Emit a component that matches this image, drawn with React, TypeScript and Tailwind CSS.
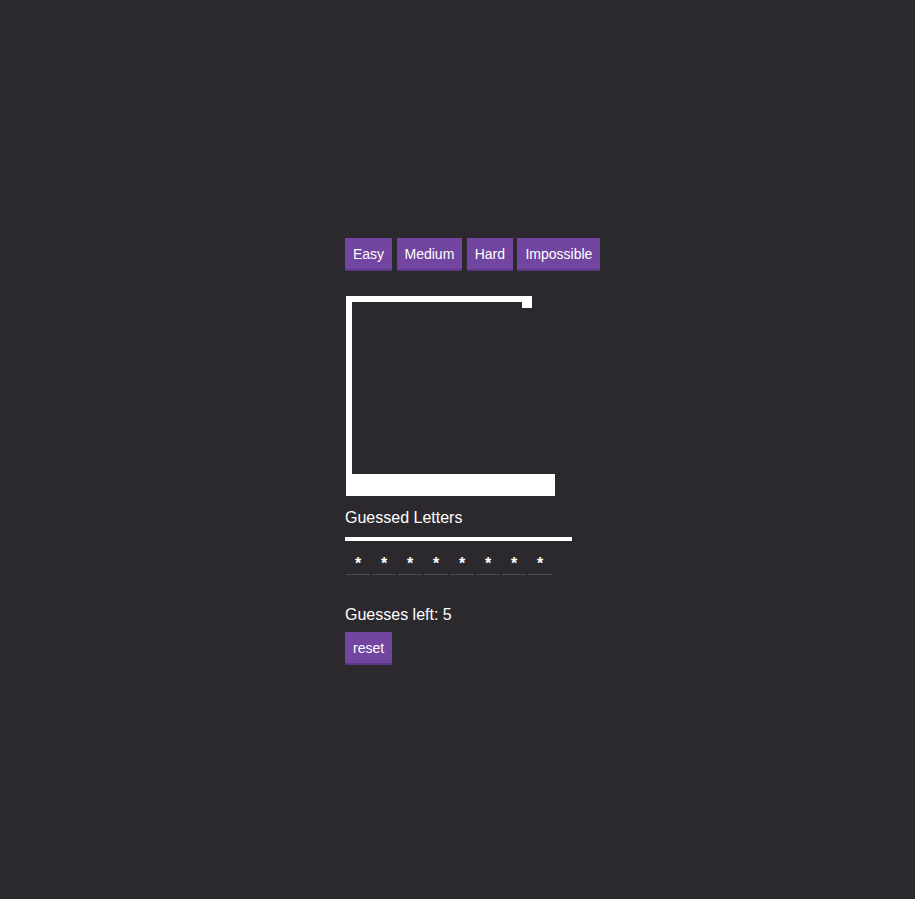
import React from 'react';

const levels = ['Easy', 'Medium', 'Hard', 'Impossible'];

function Btn({ label }: { label: string }) {
  return (
    <button className="h-[33px] px-[8px] bg-[#7245a0] border-b-2 border-[#5b3884] text-white text-[14px] leading-none whitespace-nowrap">
      {label}
    </button>
  );
}

export default function App() {
  const word = Array.from({ length: 8 }, () => '*');

  return (
    <div className="min-h-screen bg-[#2b292e] text-white font-['Liberation_Sans',Arial,sans-serif]">
      <div className="w-[229px] mx-auto pt-[238px] pl-[2px]">
        <div className="flex gap-[4.4px]">
          {levels.map(l => (
            <Btn key={l} label={l} />
          ))}
        </div>

        {/* gallows */}
        <div className="mt-[25px] ml-px flex flex-col">
          <div className="relative w-[186px] h-[178px] border-l-[6px] border-t-[6px] border-white">
            <div className="absolute right-0 top-0 w-[10px] h-[6px] bg-white" />
          </div>
          <div className="w-[209px] h-[22px] bg-white" />
        </div>

        <div className="mt-[13px] text-[16px] leading-[18px]">Guessed Letters</div>
        <div className="mt-[10px] w-[227px] h-[4px] bg-white" />

        <div className="flex gap-[2px] mt-[4px] ml-px">
          {word.map((c, i) => (
            <div
              key={i}
              className="w-[24px] h-[30px] pt-[10px] border-b border-[#4d4b52] flex items-start justify-center text-[16px] leading-[18px] font-bold"
            >
              {c}
            </div>
          ))}
        </div>

        <div className="mt-[31px] text-[16px] leading-[18px]">Guesses left: 5</div>
        <div className="mt-[8px]">
          <Btn label="reset" />
        </div>
      </div>
    </div>
  );
}
